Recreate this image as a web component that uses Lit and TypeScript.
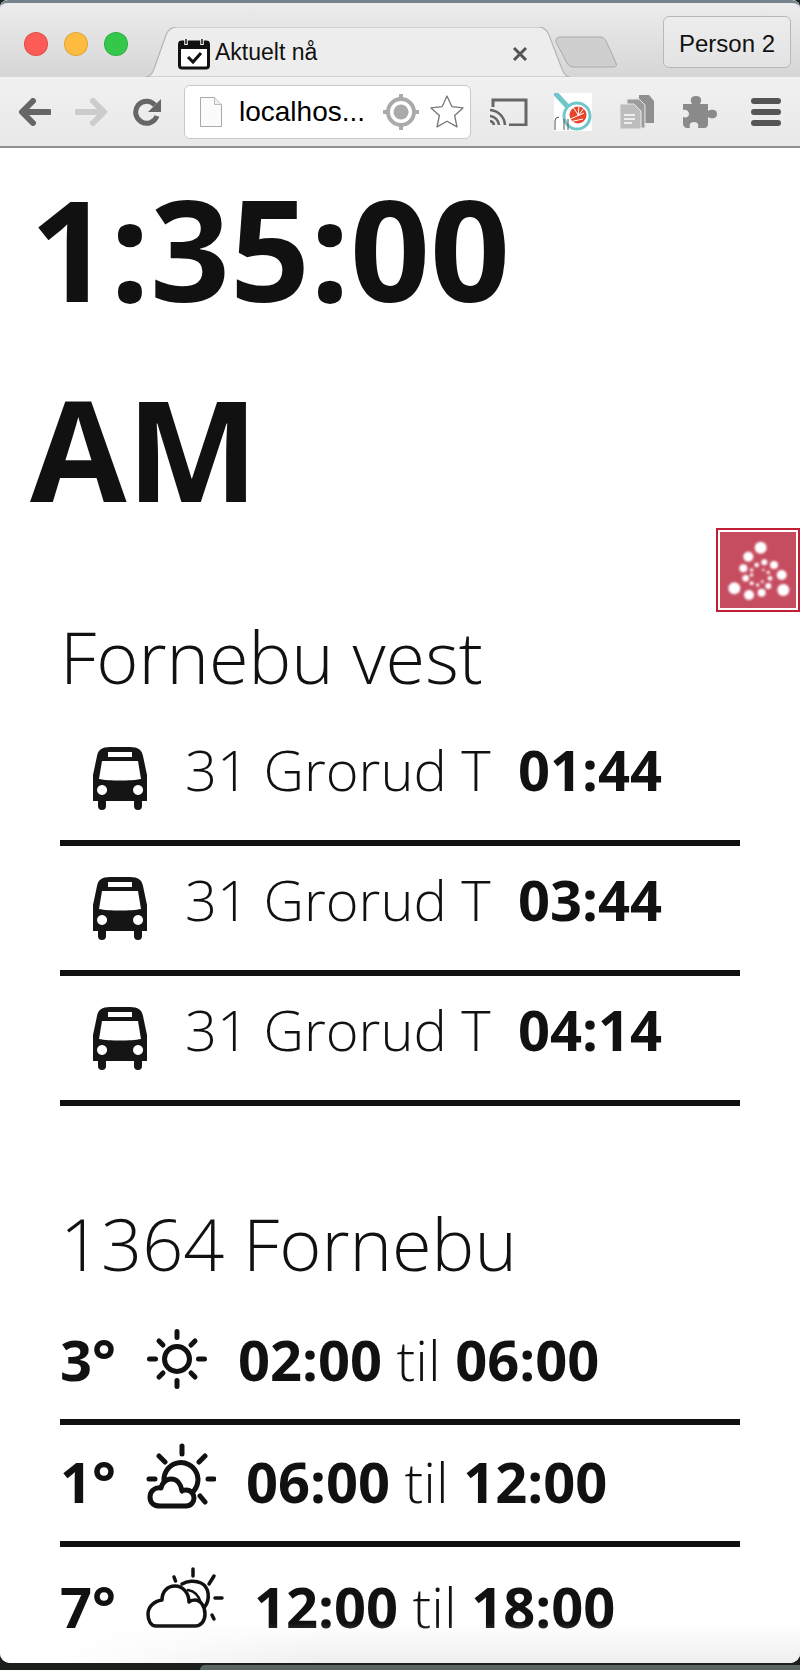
import { LitElement, html, css, svg } from "lit";
import { customElement } from "lit/decorators.js";

const busIcon = html`<svg class="bus" viewBox="0 0 54 63" aria-hidden="true">
  <path fill="#151515" fill-rule="evenodd" d="M17 0h20c8 0 12 3 13 9l4 19v26h-5v5a4 4 0 0 1-8 0v-5H13v5a4 4 0 0 1-8 0v-5H0V28L4 9C5 3 9 0 17 0ZM15 5v5h24V5ZM9 14 6 32c10 2 32 2 42 0l-3-18ZM9 38a5 5 0 1 0 .1 0ZM45 38a5 5 0 1 0 .1 0Z"/>
</svg>`;

const sunIcon = html`<svg class="wx w-sun" viewBox="0 0 62 62" aria-hidden="true" fill="none" stroke="#111" stroke-width="5" stroke-linecap="round">
  <circle cx="31" cy="31" r="12.500"/>
  <path d="M31 3.500v6M31 52.500v6M3.500 31h6M52.500 31h6M13 13l4 4M49 13l-4 4M13 49l4-4M49 49l-4-4"/>
</svg>`;

const mixIcon = html`<svg class="wx w-mix" viewBox="0 0 70 76" aria-hidden="true" fill="none" stroke="#111" stroke-width="5" stroke-linecap="round" stroke-linejoin="round">
  <path d="M36 3v8M13 13l6 6M59 13l-6 6M3 36h6M62 36h6M54 53l5 6"/>
  <path d="M18 38A17 17 0 1 1 44 51"/>
  <path d="M14 63h26c5 0 8-4 8-8s-3-8-8-8c-2 0-3 0-4 1-1-7-5-12-11-12-5 0-9 4-10 9-6-1-11 3-11 9s4 9 10 9Z" fill="#fff"/>
</svg>`;

const cloudIcon = html`<svg class="wx w-cloud" viewBox="0 0 78 78" aria-hidden="true" fill="none" stroke="#111" stroke-width="3.500" stroke-linecap="round" stroke-linejoin="round">
  <path d="M47 2v7M28 10l1.500 4M68 9l-5 8M69 31h7M66 48l2 4"/>
  <path d="M36 17c5-3 13-4 19-1 8 4 10 16 3 25"/>
  <path d="M42 23c6 1 11 6 13 13" stroke-width="2.500"/>
  <path d="M10 59h39c6 0 10-5 10-12s-4-14-10-14c-3 0-5 1-6 2 0-9-6-16-14-16s-13 6-13 14c-8 1-14 7-14 14s3 12 8 12Z" fill="#fff"/>
</svg>`;

/* dot centres and radii as measured on a 300px-wide crop of the badge */
const dots: [number, number, number][] = [
  [182, 113, 18], [145, 140, 15], [222, 165, 12], [130, 175, 12], [245, 195, 15], [137, 205, 10],
  [103, 235, 18], [250, 240, 18], [147, 255, 15], [185, 248, 12], [205, 228, 9], [210, 205, 7],
  [170, 165, 7], [193, 157, 9], [155, 180, 5], [155, 195, 5], [155, 220, 6], [173, 225, 5],
  [187, 215, 4], [205, 187, 5], [190, 180, 3.500],
];

const rows = ["01:44", "03:44", "04:14"];

@customElement("app-root")
export class AppRoot extends LitElement {
  static styles = css`
    :host { display: flex; flex-direction: column; width: 800px; height: 1670px; background: #1b1f1b; overflow: hidden; font-family: "Open Sans", sans-serif; color: #111; }
    .window { height: 1663px; flex: none; background: #fff; border-radius: 8px 8px 10px 10px; display: flex; flex-direction: column; overflow: hidden; }
    .desk { flex: 1; display: flex; padding: 2px 0 0 200px; }
    .desk i { flex: 1; background: #5a6461; border-radius: 8px 0 0 0; display: block; }

    .chrome { height: 148px; flex: none; display: flex; flex-direction: column; background: #e9e9e9; font-family: "Liberation Sans", sans-serif; color: #111; }
    .strip { height: 77px; flex: none; display: flex; align-items: flex-end; border-top: 3px solid #76828c; box-sizing: border-box; border-radius: 8px 8px 0 0; background: linear-gradient(#ececec, #d6d6d6); }
    .lights { display: flex; gap: 16px; width: 146px; flex: none; padding-left: 24px; box-sizing: border-box; align-self: flex-start; margin-top: 29px; }
    .lights i { width: 24px; height: 24px; border-radius: 50%; box-sizing: border-box; display: block; border: 1px solid rgba(0,0,0,.12); }
    .r { background: #fc5b57; } .y { background: #fdbc40; } .g { background: #34c84a; }
    .tab { position: relative; width: 424px; height: 50px; flex: none; display: flex; align-items: center; }
    .tab > svg.shape { position: absolute; inset: 0; width: 100%; height: 100%; }
    .tab .fav { position: relative; width: 32px; height: 32px; margin-left: 32px; margin-right: 5px; flex: none; margin-top: 4px; }
    .tab span { position: relative; font-size: 23px; flex: 1; padding-top: 1px; }
    .tab .x { position: relative; width: 16px; height: 16px; margin-right: 42px; margin-top: 3px; flex: none; }
    .newtab { width: 64px; height: 32px; margin-left: -16px; margin-bottom: 9px; flex: none; }
    .person { margin-left: auto; margin-right: 9px; width: 128px; height: 52px; margin-bottom: 9px; box-sizing: border-box; border: 1px solid #b8b8b8; border-radius: 6px; display: flex; align-items: center; justify-content: center; font-size: 24px; background: linear-gradient(#ededed, #e3e3e3); padding-top: 4px; }

    .bar { flex: 1; display: flex; align-items: center; background: linear-gradient(#f1f1f1, #e8e8e8); border-bottom: 2px solid #8f8f8f; box-sizing: border-box; padding-left: 19px; }
    .bar svg { flex: none; display: block; }
    .m-fwd { margin-left: 24px; } .m-rel { margin-left: 26px; }
    .m-ext { margin-left: 26px; } .m-doc { margin-left: 27px; } .m-puz { margin-left: 27px; } .m-menu { margin-left: 34px; }
    .bar svg.star { margin-left: 9px; }
    .omni { width: 287px; height: 54px; margin-left: 21px; margin-right: 19px; background: #fff; border: 1px solid #c8c8c8; border-radius: 6px; box-sizing: border-box; display: flex; align-items: center; padding-left: 15px; flex: none; font-size: 28px; color: #000; }
    .omni .txt { margin-left: 17px; width: 143px; flex: none; white-space: nowrap; }

    .page { flex: 1; position: relative; background: #fff; }
    .page::after { content: ""; position: absolute; left: 0; right: 0; bottom: 0; height: 46px; background: linear-gradient(to bottom, rgba(236,236,236,0), #ececec); -webkit-mask-image: linear-gradient(to right, transparent 60px, #000 320px); mask-image: linear-gradient(to right, transparent 60px, #000 320px); pointer-events: none; }
    h1 { margin: 0; padding-left: 30px; width: 560px; font-size: 140px; line-height: 200px; font-weight: 700; }
    .section { margin: 0 60px; }
    h2 { margin: 0; font-size: 72px; font-weight: 300; line-height: 100px; }
    .bussec { margin-top: 58px; }
    .busses { margin-top: 10px; }
    .row { display: flex; align-items: center; height: 130px; box-sizing: border-box; border-bottom: 6px solid #111; font-size: 56px; }
    .row .txt { display: flex; margin-bottom: 18px; }
    .bus { width: 54px; height: 63px; margin-left: 33px; margin-right: 38px; flex: none; }
    .light { font-weight: 300; }
    b { font-weight: 700; }
    .row .light { width: 333px; flex: none; white-space: nowrap; }
    .wrow { display: flex; align-items: center; height: 122px; box-sizing: border-box; padding-bottom: 4px; border-bottom: 6px solid #111; font-size: 56px; white-space: nowrap; }
    .wrow:last-child { border-bottom: 0; }
    .temp { width: 86px; flex: none; font-weight: 700; }
    .wx { height: auto; flex: none; margin-right: 30px; display: block; }
    .w-sun { width: 62px; } .w-mix { width: 70px; } .w-cloud { width: 78px; }
    .wsec { margin-top: 87px; }
    .wrows { margin-top: 10px; }

    .badge { position: absolute; left: 716px; top: 380px; width: 84px; height: 84px; box-sizing: border-box; border: 2px solid #c11f33; outline: 2px solid #fff; outline-offset: -4px; background: #c64d60; }
    .badge svg { width: 100%; height: 100%; display: block; }
  `;

  private weather(t: string, icon: unknown, a: string, b: string) {
    return html`<div class="wrow"><span class="temp">${t}</span>${icon}<span><b>${a}</b> <span class="light">til</span> <b>${b}</b></span></div>`;
  }

  render() {
    return html`<div class="window">
      <div class="chrome">
        <div class="strip">
          <div class="lights"><i class="r"></i><i class="y"></i><i class="g"></i></div>
          <div class="tab">
            <svg class="shape" viewBox="0 0 424 50" preserveAspectRatio="none"><path d="M0 50c6 0 8-3 10-8L22 8c2-5 5-8 11-8h361c6 0 9 3 11 8l13 34c2 5 4 8 10 8Z" fill="#ededed" stroke="#b5b5b5" stroke-width="1.200" transform="translate(-2 0)"/></svg>
            <svg class="fav" viewBox="0 0 32 32"><rect x="1.500" y="4" width="29" height="26" rx="2.500" fill="#fff" stroke="#111" stroke-width="3"/><rect x="1" y="3" width="30" height="8" fill="#111"/><path d="M8 1v6M24 1v6" stroke="#fff" stroke-width="3.500"/><path d="M8 1v5M24 1v5" stroke="#111" stroke-width="1.500"/><path d="M10 19l5 5 8-9" fill="none" stroke="#111" stroke-width="3"/></svg>
            <span>Aktuelt nå</span>
            <svg class="x" viewBox="0 0 16 16"><path d="M2 2l12 12M14 2L2 14" stroke="#555" stroke-width="3"/></svg>
          </div>
          <svg class="newtab" viewBox="0 0 64 32"><path d="M7 1h39c3 0 5 2 6 4l10 22c1 3 0 4-3 4H20c-3 0-5-1-7-4L2 6C1 3 3 1 7 1Z" fill="#cfcfcf" stroke="#aaa"/></svg>
          <div class="person">Person 2</div>
        </div>
        <div class="bar">
          <svg width="32" height="28" viewBox="0 0 32 28"><path d="M14 3L3 14l11 11M4 14h26" fill="none" stroke="#666" stroke-width="6" stroke-linecap="round" stroke-linejoin="round"/></svg>
          <svg class="m-fwd" width="32" height="28" viewBox="0 0 32 28"><path d="M18 3l11 11-11 11M28 14H2" fill="none" stroke="#ccc" stroke-width="6" stroke-linecap="round" stroke-linejoin="round"/></svg>
          <svg class="m-rel" width="30" height="30" viewBox="0 0 30 30"><path d="M22 8a11 11 0 1 0 2 11" fill="none" stroke="#666" stroke-width="5"/><path d="M28 2v13H15Z" fill="#666"/></svg>
          <div class="omni">
            <svg width="22" height="30" viewBox="0 0 22 30"><path d="M.5.5h14l7 7v22H.5Z" fill="#fbfbfb" stroke="#aaa"/><path d="M14.500.5v7h7" fill="#eee" stroke="#bbb"/></svg>
            <span class="txt">localhos...</span>
            <svg width="38" height="38" viewBox="0 0 38 38"><circle cx="19" cy="19" r="13" fill="none" stroke="#aaa" stroke-width="4"/><circle cx="19" cy="19" r="7.500" fill="#aaa"/><path d="M19 1v5M19 32v5M1 19h5M32 19h5" stroke="#aaa" stroke-width="4"/></svg>
            <svg class="star" width="36" height="36" viewBox="0 0 36 36"><path d="M18 2l4.800 10.600 11.200 1.300-8.400 7.600 2.400 11.400L18 27.200l-10 5.700 2.400-11.400L2 13.900l11.200-1.300Z" fill="#fff" stroke="#777" stroke-width="1.300" stroke-linejoin="round"/></svg>
          </div>
          <svg width="38" height="28" viewBox="0 0 38 28"><path d="M3 9V2h33v25H19" fill="none" stroke="#666" stroke-width="3"/><path d="M0 12a16 16 0 0 1 15 15M0 18a10 10 0 0 1 9 9M0 23a5 5 0 0 1 4 4" fill="none" stroke="#666" stroke-width="2.500"/></svg>
          <svg class="m-ext" width="38" height="38" viewBox="0 0 38 38"><rect width="38" height="38" fill="#fff"/><path d="M2 1l12 13" stroke="#6fc7c9" stroke-width="5" stroke-linecap="round"/><circle cx="23" cy="23" r="13" fill="#fff" stroke="#6fc7c9" stroke-width="3"/><circle cx="24" cy="22" r="8.500" fill="#e8452c"/><path d="M14 27l16-7M15 29l14-3M19 14l6 9M25 13l-1 10M30 15l-6 8" stroke="#fff" stroke-width="1"/><path d="M1 37v-9a4 4 0 0 1 4-4M10 37V26M14 37V26" fill="none" stroke="#555" stroke-width="1"/></svg>
          <svg class="m-doc" width="36" height="36" viewBox="0 0 36 36"><path d="M15 6h5V1h10l5 6v22H15Z" fill="#8f8f8f"/><path d="M8 5h12l6 6v23H8Z" fill="#9c9c9c" stroke="#e8e8e8"/><path d="M1 10h14l7 7v18H1Z" fill="#bdbdbd" stroke="#e8e8e8"/><path d="M5 21h11M5 25h11M5 29h8" stroke="#eee" stroke-width="1.800"/></svg>
          <svg class="m-puz" width="35" height="34" viewBox="0 0 35 34"><path d="M1 9h9c-2-3-2-8 4-8s6 5 4 8h8v7c3-2 9-2 9 3s-6 5-9 3v7c0 2-1 4-4 4h-6c1-3 0-6-4-6s-5 3-4 6H5c-2 0-4-2-4-4v-7c3 1 6 0 6-3s-3-5-6-4Z" fill="#8a8a8a"/></svg>
          <svg class="m-menu" width="30" height="28" viewBox="0 0 30 28"><path d="M3 3h24M3 14h24M3 25h24" stroke="#555" stroke-width="6" stroke-linecap="round"/></svg>
        </div>
      </div>
      <div class="page">
        <h1>1:35:00 AM</h1>
        <div class="section bussec">
          <h2>Fornebu vest</h2>
          <div class="busses">
            ${rows.map((t) => html`<div class="row">${busIcon}<span class="txt"><span class="light">31 Grorud T</span><b>${t}</b></span></div>`)}
          </div>
        </div>
        <div class="section wsec">
          <h2>1364 Fornebu</h2>
          <div class="wrows">
            ${this.weather("3°", sunIcon, "02:00", "06:00")}
            ${this.weather("1°", mixIcon, "06:00", "12:00")}
            ${this.weather("7°", cloudIcon, "12:00", "18:00")}
          </div>
        </div>
        <div class="badge">
          <svg viewBox="0 0 80 80"><defs><filter id="b"><feGaussianBlur stdDeviation=".8"/></filter></defs>
            <g fill="#fff" filter="url(#b)">${dots.map(([x, y, r]) => svg`<circle cx=${x / 3 - 18} cy=${y / 3 - 20} r=${r / 3}/>`)}</g>
          </svg>
        </div>
      </div>
    </div>
    <div class="desk"><i></i></div>`;
  }
}
